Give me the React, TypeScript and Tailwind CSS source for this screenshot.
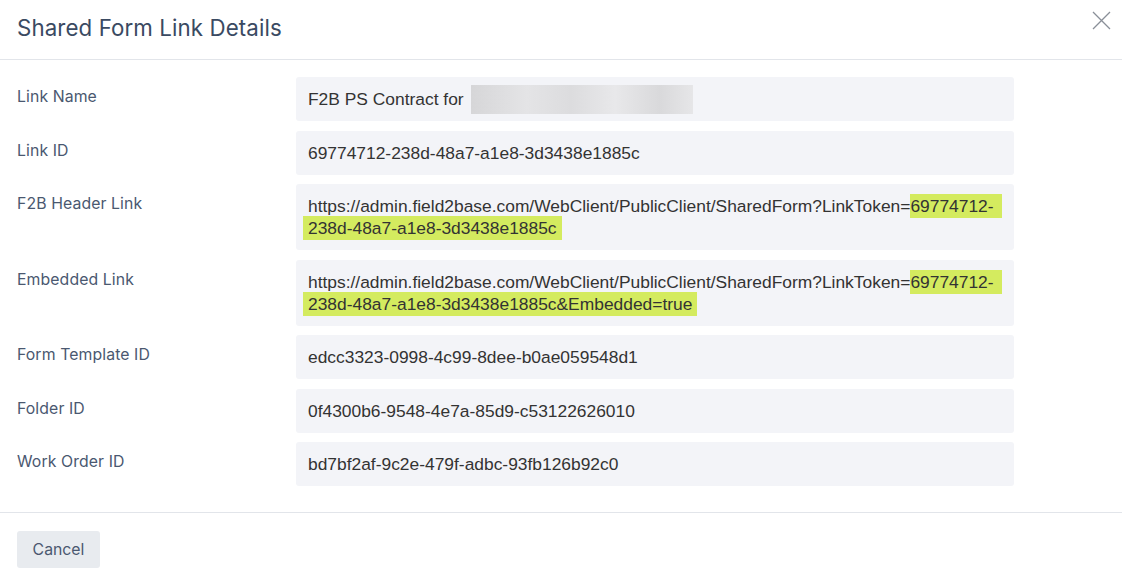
const rows: { label: string; value: string }[] = [
  { label: "Link ID", value: "69774712-238d-48a7-a1e8-3d3438e1885c" },
]

const rest: { label: string; value: string }[] = [
  { label: "Form Template ID", value: "edcc3323-0998-4c99-8dee-b0ae059548d1" },
  { label: "Folder ID", value: "0f4300b6-9548-4e7a-85d9-c53122626010" },
  { label: "Work Order ID", value: "bd7bf2af-9c2e-479f-adbc-93fb126b92c0" },
]

const URL_BASE = "https://admin.field2base.com/WebClient/PublicClient/SharedForm?LinkToken="

function Label({ children }: { children: React.ReactNode }) {
  return (
    <div className="w-[279px] shrink-0 pt-[8px] text-[15.8px] leading-[23px] tracking-[0.1px] text-[#4a5870] font-['Inter',sans-serif]">
      {children}
    </div>
  )
}

function Box({ children }: { children: React.ReactNode }) {
  return (
    <div className="w-[718px] rounded-[3px] bg-[#f3f4f8] px-[12px] py-[11px] text-[17.4px] leading-[22px] text-[#333333] font-['Liberation_Sans',Arial,sans-serif]">
      {children}
    </div>
  )
}

// token part is shown selected (lime highlight), wrapping onto a second line
function LinkValue({ tail }: { tail: string }) {
  return (
    <>
      <div className="flex whitespace-nowrap">
        <span>{URL_BASE}</span>
        <span className="-my-[1px] flex-1 bg-[#d4eb5f] py-[1px]">69774712-</span>
      </div>
      <div className="flex whitespace-nowrap">
        <span className="-my-[1px] -ml-[5px] bg-[#d4eb5f] py-[1px] pl-[5px] pr-[5px]">{tail}</span>
      </div>
    </>
  )
}

export default function App() {
  return (
    <div className="flex h-[583px] w-[1122px] flex-col bg-white">
      <div className="flex h-[60px] shrink-0 items-start justify-between border-b border-[#e2e5ea] pl-[17px] pr-[11px]">
        <h1 className="pt-[13px] text-[22.3px] leading-[30px] tracking-[0.1px] text-[#3a4a62] font-['Inter',sans-serif]">
          Shared Form Link Details
        </h1>
        <button className="mt-[11px] text-[#8a8f98]">
          <svg width="19" height="19" viewBox="0 0 19 19" fill="none" stroke="currentColor" strokeWidth="1.3">
            <path d="M1 1 L18 18 M18 1 L1 18" />
          </svg>
        </button>
      </div>

      <div className="flex flex-1 flex-col gap-[9.5px] pl-[17px] pt-[17px]">
        <div className="flex">
          <Label>Link Name</Label>
          <Box>
            <div className="flex h-[22px] items-center">
              <span className="whitespace-pre">F2B PS Contract for </span>
              {/* redacted part of the name */}
              <span className="ml-[3px] -my-[3px] inline-block h-[29px] w-[222px] bg-[linear-gradient(90deg,#d6d6d8_0%,#e4e4e6_25%,#dcdcde_45%,#e8e8ea_65%,#d9d9db_85%,#e6e6e8_100%)] blur-[0.5px]" />
            </div>
          </Box>
        </div>
        {rows.map((r) => (
          <div key={r.label} className="flex">
            <Label>{r.label}</Label>
            <Box>{r.value}</Box>
          </div>
        ))}
        <div className="flex">
          <Label>F2B Header Link</Label>
          <Box>
            <LinkValue tail="238d-48a7-a1e8-3d3438e1885c" />
          </Box>
        </div>
        <div className="flex">
          <Label>Embedded Link</Label>
          <Box>
            <LinkValue tail="238d-48a7-a1e8-3d3438e1885c&Embedded=true" />
          </Box>
        </div>
        {rest.map((r) => (
          <div key={r.label} className="flex">
            <Label>{r.label}</Label>
            <Box>{r.value}</Box>
          </div>
        ))}
      </div>

      <div className="h-[71px] shrink-0 border-t border-[#e2e5ea] pl-[17px] pt-[18px]">
        <button className="h-[37px] w-[83px] rounded-[3px] bg-[#e8ebef] text-[15.8px] text-[#4a5870] font-['Inter',sans-serif]">
          Cancel
        </button>
      </div>
    </div>
  )
}
